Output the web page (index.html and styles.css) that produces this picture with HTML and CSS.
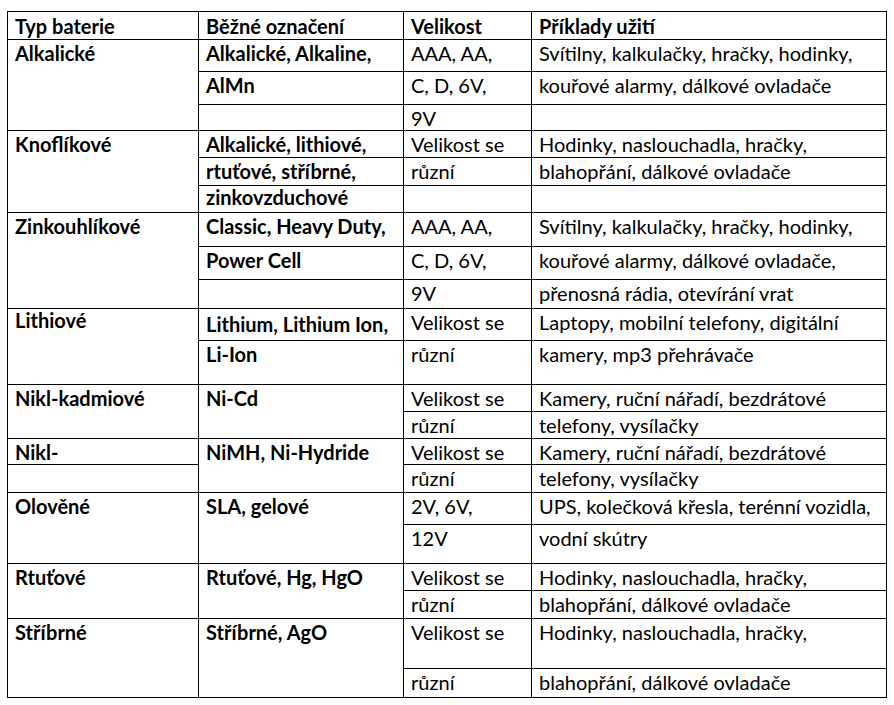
FILE: index.html
```html
<!DOCTYPE html>
<html lang="cs">
<head>
<meta charset="utf-8">
<title>Typy baterií</title>
<link rel="stylesheet" href="styles.css">
</head>
<body>
<div class="page">
<table class="bat">
<colgroup>
<col class="c1"><col class="c2"><col class="c3"><col class="c4">
</colgroup>
<thead>
<tr class="h28 head">
<th>Typ baterie</th><th>Běžné označení</th><th>Velikost</th><th>Příklady užití</th>
</tr>
</thead>
<tbody>
<tr class="h32"><td rowspan="3" class="b">Alkalické</td><td class="b">Alkalické, Alkaline,</td><td>AAA, AA,</td><td>Svítilny, kalkulačky, hračky, hodinky,</td></tr>
<tr class="h33"><td class="b">AlMn</td><td>C, D, 6V,</td><td>kouřové alarmy, dálkové ovladače</td></tr>
<tr class="h26"><td></td><td>9V</td><td></td></tr>

<tr class="h27"><td rowspan="3" class="b">Knoflíkové</td><td class="b">Alkalické, lithiové,</td><td>Velikost se</td><td>Hodinky, naslouchadla, hračky,</td></tr>
<tr class="h28"><td class="b">rtuťové, stříbrné,</td><td>různí</td><td>blahopřání, dálkové ovladače</td></tr>
<tr class="h27 up1"><td class="b">zinkovzduchové</td><td></td><td></td></tr>

<tr class="h34"><td rowspan="3" class="b">Zinkouhlíkové</td><td class="b">Classic, Heavy Duty,</td><td>AAA, AA,</td><td>Svítilny, kalkulačky, hračky, hodinky,</td></tr>
<tr class="h33"><td class="b">Power Cell</td><td>C, D, 6V,</td><td>kouřové alarmy, dálkové ovladače,</td></tr>
<tr class="h29"><td></td><td>9V</td><td>přenosná rádia, otevírání vrat</td></tr>

<tr class="h32"><td rowspan="2" class="b up2">Lithiové</td><td class="b dn2">Lithium, Lithium Ion,</td><td>Velikost se</td><td>Laptopy, mobilní telefony, digitální</td></tr>
<tr class="h44"><td class="b">Li-Ion</td><td>různí</td><td>kamery, mp3 přehrávače</td></tr>

<tr class="h27"><td rowspan="2" class="b">Nikl-kadmiové</td><td rowspan="2" class="b">Ni-Cd</td><td>Velikost se</td><td>Kamery, ruční nářadí, bezdrátové</td></tr>
<tr class="h27"><td>různí</td><td>telefony, vysílačky</td></tr>

<tr class="h26"><td class="b">Nikl-</td><td rowspan="2" class="b">NiMH, Ni-Hydride</td><td>Velikost se</td><td>Kamery, ruční nářadí, bezdrátové</td></tr>
<tr class="h28"><td></td><td>různí</td><td>telefony, vysílačky</td></tr>

<tr class="h32"><td rowspan="2" class="b">Olověné</td><td rowspan="2" class="b">SLA, gelové</td><td>2V, 6V,</td><td>UPS, kolečková křesla, terénní vozidla,</td></tr>
<tr class="h39"><td>12V</td><td>vodní skútry</td></tr>

<tr class="h27"><td rowspan="2" class="b">Rtuťové</td><td rowspan="2" class="b">Rtuťové, Hg, HgO</td><td>Velikost se</td><td>Hodinky, naslouchadla, hračky,</td></tr>
<tr class="h28"><td>různí</td><td>blahopřání, dálkové ovladače</td></tr>

<tr class="h50"><td rowspan="2" class="b">Stříbrné</td><td rowspan="2" class="b">Stříbrné, AgO</td><td>Velikost se</td><td>Hodinky, naslouchadla, hračky,</td></tr>
<tr class="h29"><td>různí</td><td>blahopřání, dálkové ovladače</td></tr>
</tbody>
</table>
</div>
</body>
</html>
```
FILE: styles.css
```css
html, body {
  margin: 0;
  padding: 0;
  background: #ffffff;
}
.page {
  padding: 11px 0 0 7px;
}
.bat {
  border-collapse: collapse;
  table-layout: fixed;
  width: 879px;
  font-family: Lato, "Liberation Sans", sans-serif;
  font-size: 20px;
  color: #000;
}
.c1 { width: 191px; }
.c2 { width: 205px; }
.c3 { width: 128px; }
.c4 { width: 355px; }
.bat th, .bat td {
  border: 1px solid #000;
  padding: 3px 0 0 7px;
  line-height: 20px;
  vertical-align: top;
  text-align: left;
  white-space: nowrap;
}
.bat th, .bat .b { font-weight: 700; }
.head th { padding-top: 4px; }
.up1 td { padding-top: 1px; }
.bat td.up2 { padding-top: 1px; }
.bat td.dn2 { padding-top: 5px; }
.h26 { height: 26px; }
.h27 { height: 27px; }
.h28 { height: 28px; }
.h29 { height: 29px; }
.h32 { height: 32px; }
.h33 { height: 33px; }
.h34 { height: 34px; }
.h39 { height: 39px; }
.h44 { height: 44px; }
.h50 { height: 50px; }
```
